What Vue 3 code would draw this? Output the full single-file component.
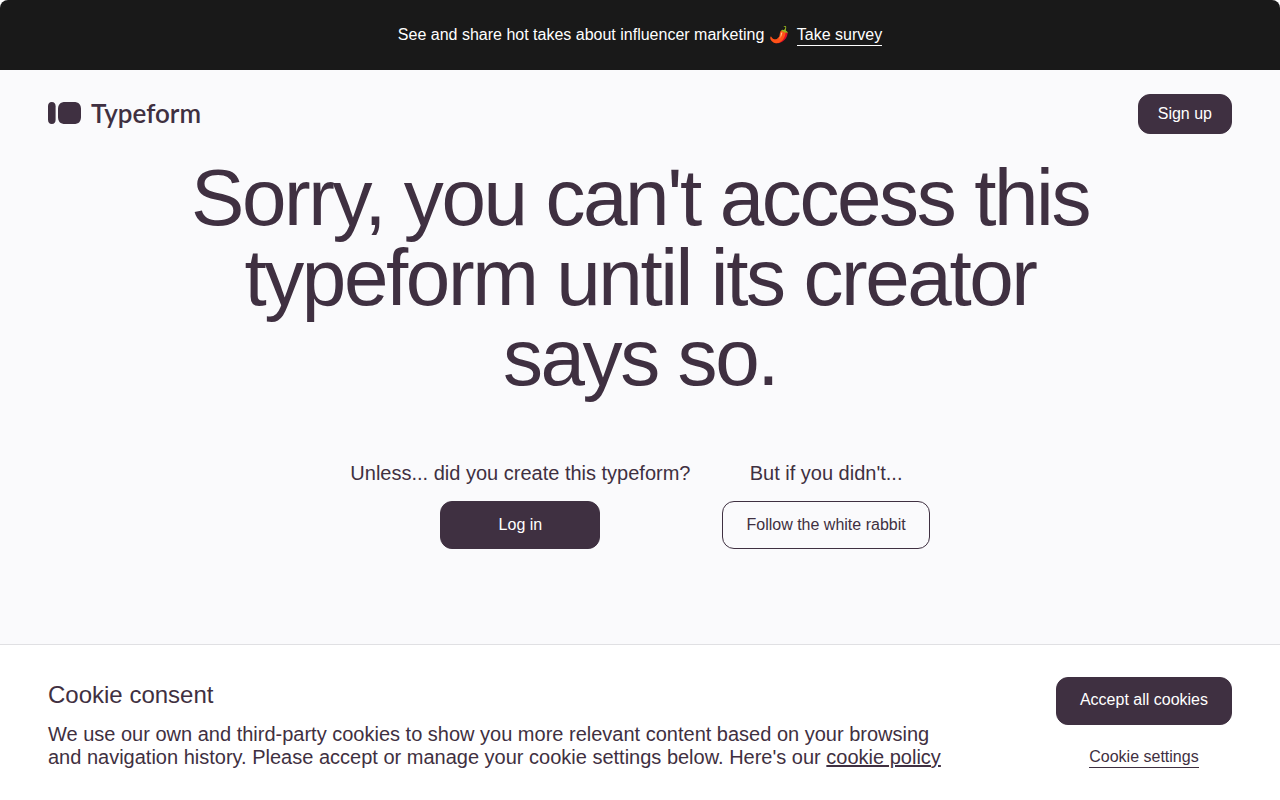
<script setup>
const choices = [
  { prompt: 'Unless... did you create this typeform?', action: 'Log in', kind: 'solid' },
  { prompt: "But if you didn't...", action: 'Follow the white rabbit', kind: 'outline' },
]
</script>

<template>
  <div class="page">
    <aside class="banner">
      <p>See and share hot takes about influencer marketing 🌶️</p>
      <a class="underlined" href="#survey">Take survey</a>
    </aside>

    <header class="header">
      <a class="logo" href="#home">
        <svg width="33" height="22" viewBox="0 0 33 22" aria-hidden="true">
          <path d="M3.800 0C6.400 0 7.600 1.800 7.600 4.200v13.600c0 2.400-1.200 4.200-3.800 4.200S0 20.200 0 17.800V4.200C0 1.800 1.200 0 3.800 0z" />
          <path d="M17.500 0h8c5.500 0 7.500 2.500 7.500 7.500v7c0 5-2 7.500-7.500 7.500h-8c-5.500 0-7.500-2.500-7.500-7.500v-7C10 2.500 12 0 17.500 0z" />
        </svg>
        <span>Typeform</span>
      </a>
      <button class="button small" type="button">Sign up</button>
    </header>

    <main class="main">
      <h1>Sorry, you can't access this typeform until its creator says so.</h1>
      <div class="choices">
        <section v-for="choice in choices" :key="choice.action" class="choice">
          <p>{{ choice.prompt }}</p>
          <button type="button" class="button" :class="choice.kind">{{ choice.action }}</button>
        </section>
      </div>
    </main>

    <section class="consent" aria-labelledby="consent-title">
      <div class="consent-text">
        <h2 id="consent-title">Cookie consent</h2>
        <p>
          We use our own and third-party cookies to show you more relevant content based on your
          browsing and navigation history. Please accept or manage your cookie settings below.
          Here's our <a href="#policy">cookie policy</a>
        </p>
      </div>
      <div class="consent-actions">
        <button class="button" type="button">Accept all cookies</button>
        <button class="underlined" type="button">Cookie settings</button>
      </div>
    </section>
  </div>
</template>

<style>
body {
  margin: 0;
  background: #fff;
}
</style>

<style scoped>
.page {
  display: flex;
  flex-direction: column;
  min-height: 100vh;
  color: #3f3041;
  font-family: "Liberation Sans", Arial, sans-serif;
  font-size: 16px;
}

h1,
h2,
p {
  margin: 0;
  font-weight: 400;
}

a {
  color: inherit;
}

.banner {
  display: flex;
  align-items: center;
  justify-content: center;
  gap: 8px;
  min-height: 70px;
  border-radius: 8px 8px 0 0;
  background: #191919;
  color: #fff;
  line-height: 22px;
}

.underlined {
  padding: 0;
  border: 0;
  border-bottom: 1px solid currentColor;
  background: none;
  color: inherit;
  font: inherit;
  line-height: 20px;
  text-decoration: none;
  cursor: pointer;
}

.header {
  display: flex;
  align-items: center;
  justify-content: space-between;
  padding: 24px 48px;
  background: #fafafc;
}

.logo {
  display: flex;
  align-items: center;
  gap: 10px;
  padding-bottom: 2px;
  font-family: Lato, sans-serif;
  font-size: 26px;
  font-weight: 600;
  line-height: 32px;
  text-decoration: none;
}

.logo svg {
  fill: currentColor;
}

.button {
  box-sizing: border-box;
  min-width: 160px;
  height: 48px;
  padding: 0 23px 2px;
  border: 1px solid #3f3041;
  border-radius: 12px;
  background: #3f3041;
  color: #fff;
  font: inherit;
  cursor: pointer;
}

.button.small {
  min-width: 0;
  height: 40px;
  padding: 0 19px;
}

.button.outline {
  background: transparent;
  color: #3f3041;
}

.main {
  flex: 1;
  display: flex;
  flex-direction: column;
  align-items: center;
  gap: 64px;
  padding-bottom: 64px;
  background: #fafafc;
}

h1 {
  max-width: 928px;
  font-size: 80px;
  line-height: 80px;
  letter-spacing: -0.03em;
  text-align: center;
}

.choices {
  display: flex;
  flex-wrap: wrap;
  justify-content: center;
  gap: 32px;
}

.choice {
  display: flex;
  flex-direction: column;
  align-items: center;
  gap: 16px;
  font-size: 20px;
  line-height: 23px;
}

.choice .button {
  font-size: 16px;
}

.consent {
  display: flex;
  align-items: flex-start;
  justify-content: space-between;
  gap: 48px;
  padding: 32px 48px 31px;
  border-top: 1px solid #e0e0e3;
  background: #fff;
}

.consent-text {
  max-width: 900px;
}

h2 {
  margin-bottom: 10px;
  font-size: 24px;
  line-height: 36px;
}

.consent-text p {
  font-size: 20px;
  line-height: 23px;
}

.consent-actions {
  display: flex;
  flex-direction: column;
  align-items: center;
  flex-shrink: 0;
  gap: 22px;
}
</style>
